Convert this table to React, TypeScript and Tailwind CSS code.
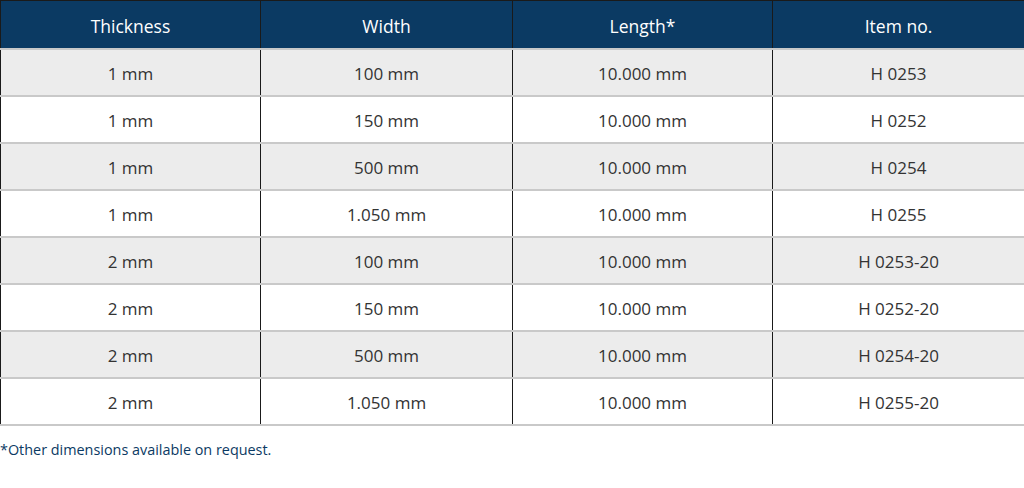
import React from "react";

const rows = [
  ["1 mm", "100 mm", "10.000 mm", "H 0253"],
  ["1 mm", "150 mm", "10.000 mm", "H 0252"],
  ["1 mm", "500 mm", "10.000 mm", "H 0254"],
  ["1 mm", "1.050 mm", "10.000 mm", "H 0255"],
  ["2 mm", "100 mm", "10.000 mm", "H 0253-20"],
  ["2 mm", "150 mm", "10.000 mm", "H 0252-20"],
  ["2 mm", "500 mm", "10.000 mm", "H 0254-20"],
  ["2 mm", "1.050 mm", "10.000 mm", "H 0255-20"],
];

const widths = ["w-[260px]", "w-[252px]", "w-[260px]", "w-[252px]"];

export default function App() {
  return (
    <div className="w-[1024px] h-[488px] bg-white" style={{ fontFamily: '"Open Sans", "Noto Sans", sans-serif' }}>
      <table className="border-collapse w-[1024px] table-fixed">
        <thead>
          <tr className="bg-[#0b3a63] h-[48px]">
            {["Thickness", "Width", "Length*", "Item no."].map((h, i) => (
              <th
                key={h}
                className={`${widths[i]} pt-[3px] text-white font-normal text-[17.5px] text-center border-x border-[#1a1a1a] border-t border-t-[#1a1a1a]`}
              >
                {h}
              </th>
            ))}
          </tr>
        </thead>
        <tbody>
          {rows.map((r, ri) => (
            <tr key={ri} className={`h-[47px] ${ri % 2 === 0 ? "bg-[#ececec]" : "bg-white"}`}>
              {r.map((c, ci) => (
                <td
                  key={ci}
                  className="pt-[3px] text-center text-[17px] text-[#333333] border-x border-x-[#1a1a1a] border-y-2 border-y-[#c9c9c9]"
                >
                  {c}
                </td>
              ))}
            </tr>
          ))}
        </tbody>
      </table>
      <p className="mt-[14px] text-[14.4px] text-[#0b3a63] leading-5">*Other dimensions available on request.</p>
    </div>
  );
}
